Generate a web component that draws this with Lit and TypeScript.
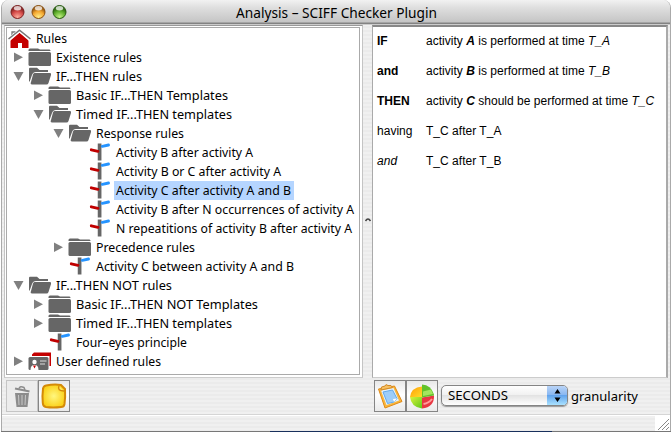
import { LitElement, html, css, svg } from "lit";
import { customElement } from "lit/decorators.js";
import { classMap } from "lit/directives/class-map.js";

type Row = { level: number; icon: string; text: string; width: number; arrow?: "open" | "closed"; selected?: boolean };

const ROWS: Row[] = [
  { level: 0, icon: "home", text: "Rules", width: 31 },
  { level: 1, icon: "closed", text: "Existence rules", width: 86, arrow: "closed" },
  { level: 1, icon: "open", text: "IF...THEN rules", width: 86, arrow: "open" },
  { level: 2, icon: "closed", text: "Basic IF...THEN Templates", width: 152, arrow: "closed" },
  { level: 2, icon: "open", text: "Timed IF...THEN templates", width: 156, arrow: "open" },
  { level: 3, icon: "open", text: "Response rules", width: 88, arrow: "open" },
  { level: 4, icon: "sign", text: "Activity B after activity A", width: 137 },
  { level: 4, icon: "sign", text: "Activity B or C after activity A", width: 165 },
  { level: 4, icon: "sign", text: "Activity C after activity A and B", width: 175, selected: true },
  { level: 4, icon: "sign", text: "Activity B after N occurrences of activity A", width: 238 },
  { level: 4, icon: "sign", text: "N repeatitions of activity B after activity A", width: 236 },
  { level: 3, icon: "closed", text: "Precedence rules", width: 99, arrow: "closed" },
  { level: 3, icon: "sign", text: "Activity C between activity A and B", width: 198 },
  { level: 1, icon: "open", text: "IF...THEN NOT rules", width: 116, arrow: "open" },
  { level: 2, icon: "closed", text: "Basic IF...THEN NOT Templates", width: 182, arrow: "closed" },
  { level: 2, icon: "closed", text: "Timed IF...THEN templates", width: 156, arrow: "closed" },
  { level: 2, icon: "sign", text: "Four–eyes principle", width: 111 },
  { level: 1, icon: "user", text: "User defined rules", width: 105, arrow: "closed" },
];

const ICONS: Record<string, unknown> = {
  home: svg`<path d="M4 9V3h3v3" fill="none" stroke="#777" stroke-width="1.3"/><path d="M2.500 10.500L11.500 3.500L20.500 10.500V19H14V14h-4v5H2.500Z" fill="#c40000"/><path d="M.5 11L11.500 1.500L22.500 11" fill="none" stroke="#fff" stroke-width="3.500"/><path d="M.5 10L11.500 1.200L22.500 10" fill="none" stroke="#777" stroke-width="1.600"/>`,
  closed: svg`<path d="M.5 3V2Q.5.500 2 .5H10L12 1.500H21.500Q22.500 1.500 22.500 3Z" fill="#666"/><path d="M2 4H21.500Q23 4 23 5.500V16.500Q23 18 21.500 18H2Q.5 18 .5 16.500V5.500Q.5 4 2 4Z" fill="#666"/>`,
  open: svg`<path d="M1 14V2Q1 .7 2 .7H9L11.500 3H20V5H8Q5 5 4 8L1.500 15Z" fill="#666"/><path d="M6.500 6H22Q23.500 6 23 8L20.500 16Q20 17.500 18.500 17.500H4Q2 17.500 3 15L5 7.500Q5.400 6 6.500 6Z" fill="#666"/>`,
  sign: svg`<path d="M11.600 .5V17.500" stroke="#666" stroke-width="3.700"/><path d="M3.300 6.800L10 8.300" stroke="#c00000" stroke-width="2.900" stroke-linecap="round"/><path d="M14.300 3.400L20.500 2" stroke="#2694ff" stroke-width="2.900" stroke-linecap="round"/>`,
  user: svg`<path d="M4 4V2.500L6 .5H23V14H21.500V4Z" fill="#c40000"/><rect x=".5" y="5" width="20" height="13" rx="1.500" fill="#666"/><circle cx="6.500" cy="10" r="2.200" fill="#fff"/><path d="M2.500 18Q2.500 13 6.500 13T10.500 18Z" fill="#fff"/><path d="M5 13.500h3L6.500 16.500Z" fill="#c40000"/><path d="M12 9h6.500M12 12h5" stroke="#ddd" stroke-width="1.200"/>`,
};

@customElement("app-root")
export class AppRoot extends LitElement {
  static styles = css`
    :host { display: block; width: 672px; height: 433px; overflow: hidden; background: #fff; font: 12.5px "Noto Sans", sans-serif; color: #000; }
    * { box-sizing: border-box; }
    svg { display: block; flex: none; overflow: visible; }
    .window { height: 431px; width: 670px; margin-left: 1px; border: solid #aaa; border-width: 0 1px 0 1px; border-radius: 8px 8px 0 0; display: flex; flex-direction: column; background: repeating-linear-gradient(#f0f0f0 0 2px, #ebebeb 2px 4px); overflow: hidden; }
    .title { height: 25px; flex: none; background: linear-gradient(#f2f2f2, #dedede 8px, #c5c5c5 22px, #858585 23px, #808080 24px, #ccc 24px); display: flex; padding: 5px 0 0 8px; gap: 6px; }
    .title-label { margin-left: 163px; margin-top: -1px; }
    .body { height: 391px; flex: none; display: flex; padding-left: 2px; padding-right: 2px; border-bottom: 1px solid #fff; box-shadow: 0 -1px #d5d5d5 inset; }
    .left { width: 359px; display: flex; flex-direction: column; }
    .pane { height: 353px; flex: none; border: 1px solid #c4c4c4; border-top-color: #999; border-bottom-color: #ccc; background: #fff; padding: 1px 2px 2px 1px; }
    .tree { height: 348px; border: 1px solid #aaa; background: #fff; padding-top: 1px; }
    .row { height: 19px; display: flex; align-items: center; }
    .spacer { flex: none; }
    .icon { width: 24px; height: 19px; margin-left: 1px; }
    .label { height: 19px; margin-left: 2px; padding: 0 2px; }
    .selected { background: #b5d5ff; padding-right: 3px; }
    .divider { width: 9px; display: flex; align-items: center; justify-content: center; }
    .right { flex: 1; display: flex; flex-direction: column; }
    .doc { height: 353px; background: #fff; border: solid #aaa; border-width: 2px 2px 1px 1px; border-top-color: #888; border-bottom-color: #ccc; flex: none; padding: 0 0 0 4px; font: 12px "Liberation Sans", sans-serif; letter-spacing: .02px; }
    .line { height: 30px; display: flex; align-items: center; position: relative; top: -1px; }
    .key { width: 49px; }
    .tools { display: flex; height: 32px; margin: 2px 0 0 2px; align-items: flex-start; }
    .button { width: 32px; height: 32px; border: 1px solid #858585; background: linear-gradient(#e8e8e8, #fff 45%, #eaeaea); display: flex; align-items: center; justify-content: center; }
    .disabled { border-color: #c5c5c5; background: #ececec; }
    .select { margin: 5px 0 0 3px; width: 127px; height: 21px; border: 1px solid #858585; border-radius: 5px; display: flex; overflow: hidden; background: linear-gradient(#fff, #f1f1f1 45%, #e3e3e3 50%, #fff); box-shadow: 0 1px 1px #999; }
    .value { width: 105px; padding-left: 6px; }
    .knob { flex: 1; display: flex; align-items: center; justify-content: center; background: linear-gradient(#b9d4f7, #8ab8f1 45%, #62a4ed 50%, #a9e2ff); }
    .gran { margin: 7px 0 0 3px; }
    .status { flex: 1; display: flex; justify-content: flex-end; align-items: flex-end; }
    .grip { width: 15px; height: 15px; background: #fff; }
    .edge { height: 1px; margin-left: 1px; width: 670px; background: linear-gradient(90deg, #777 0 269px, #18305c 269px 551px, #777 551px); }
  `;

  label(text: string, width: number, size = 12.5) {
    return html`<svg width=${width} height="19"><text x="0" y="14" font-size=${size} textLength=${width} lengthAdjust="spacingAndGlyphs">${text}</text></svg>`;
  }

  light(a: string, b: string, c: string, id: string) {
    return html`<svg width="15" height="15"><defs><radialGradient id=${id} cx=".5" cy=".9" r=".75"><stop offset="0" stop-color=${a}/><stop offset=".6" stop-color=${b}/><stop offset="1" stop-color=${c}/></radialGradient></defs><circle cx="7.500" cy="7" r="6.500" fill="url(#${id})" stroke=${c} stroke-width="1"/><ellipse cx="7.500" cy="3.200" rx="3.600" ry="2.200" fill="#fff" opacity=".75"/></svg>`;
  }

  row(r: Row) {
    return html`<div class="row">
      <span class="spacer" style="width:${r.level ? r.level * 20 - 14 : 0}px"></span>
      ${r.level ? html`<svg width="14" height="19">${r.arrow === "closed" ? svg`<path d="M1 4.500V14L10 9.200Z" fill="#808080"/>` : r.arrow === "open" ? svg`<path d="M.5 5H10.500L5.500 14Z" fill="#808080"/>` : ""}</svg>` : ""}
      <svg class="icon">${ICONS[r.icon]}</svg>
      <span class=${classMap({ label: true, selected: !!r.selected })}>${this.label(r.text, r.width)}</span>
    </div>`;
  }

  render() {
    return html`<div class="window">
      <div class="title">
        ${this.light("#ffb0a0", "#d44a48", "#7c2020", "red")}${this.light("#fff08a", "#f4a62e", "#8a5010", "amber")}${this.light("#c8f58a", "#5fae2c", "#285c10", "green")}
        <span class="title-label">${this.label("Analysis – SCIFF Checker Plugin", 201, 14)}</span>
      </div>
      <div class="body">
        <div class="left">
          <div class="pane"><div class="tree">${ROWS.map((r) => this.row(r))}</div></div>
          <div class="tools">
            <div class="button disabled"><svg width="20" height="24"><path d="M3 9H17L15.500 23H4.500Z" fill="#8c8c8c"/><path d="M6.500 11l.5 10M10 11v10M13.500 11L13 21" stroke="#c8c8c8"/><path d="M3 4.500L17.500 7.500" stroke="#8c8c8c" stroke-width="2"/><path d="M7 4.500Q8 1.500 12 3.500L13 6" fill="none" stroke="#8c8c8c" stroke-width="1.500"/></svg></div>
            <div class="button"><svg width="26" height="26"><defs><radialGradient id="note"><stop stop-color="#fff780"/><stop offset="1" stop-color="#fbd21c"/></radialGradient></defs><path d="M5 2.500Q13 1 20 2L24 6Q24.500 14 23.500 21Q23 24 20 24Q12 25 5 24Q2 23.500 1.800 20Q1 13 2 6Q2.300 3 5 2.500Z" fill="url(#note)" stroke="#d48a08" stroke-width="2"/><path d="M18 3Q16 8 23 8" fill="#ffe868" stroke="#d48a08" stroke-width="1.500"/></svg></div>
          </div>
        </div>
        <div class="divider"><svg width="6" height="4"><path d="M.5 3Q3-.8 5.500 3" fill="none" stroke="#444" stroke-width="1.500"/></svg></div>
        <div class="right">
          <div class="doc">
            <div class="line"><b class="key">IF</b><span>activity <b><i>A</i></b> is performed at time <i>T_A</i></span></div>
            <div class="line"><b class="key">and</b><span>activity <b><i>B</i></b> is performed at time <i>T_B</i></span></div>
            <div class="line"><b class="key">THEN</b><span>activity <b><i>C</i></b> should be performed at time <i>T_C</i></span></div>
            <div class="line"><span class="key">having</span><span>T_C after T_A</span></div>
            <div class="line"><i class="key">and</i><span>T_C after T_B</span></div>
          </div>
          <div class="tools">
            <div class="button"><svg width="28" height="28"><path d="M2.500 7L18.500 4L26 19.500L9 26Z" fill="#f9b63c" stroke="#e08a17"/><path d="M5 8.500L17.500 6L23 18.500L10.500 23Z" fill="#e4f2ff"/><path d="M7 10L16.500 8L21 16.500L18 20L11.500 21.500Z" fill="#9dcdf8" stroke="#64a9e8"/><path d="M21 16.500L17 17L18 20Z" fill="#fff"/><path d="M5 8L5.500 5L9 4Q9.500 1.500 12 3.500L15 3.500L16.500 5.500Z" fill="#f8c060" stroke="#d08a2a"/></svg></div>
            <div class="button"><svg width="28" height="28"><defs><linearGradient id="gold" y2="1"><stop stop-color="#ff9c08"/><stop offset="1" stop-color="#ffdc28"/></linearGradient><linearGradient id="lime" y2="1"><stop stop-color="#d9f23a"/><stop offset="1" stop-color="#5fc81c"/></linearGradient></defs><path d="M14 15V4.500Q3 5.500 2 15Z" fill="url(#gold)"/><path d="M14 15H2Q3 25 14 26.500Z" fill="url(#lime)"/><path d="M14 15.500L26 13.500Q26.500 25 14 26.500Z" fill="#e83742"/><path d="M15.500 22Q21 21 24 17" fill="none" stroke="#ff9c9c" stroke-width="2"/><path d="M14 15.500V2.500Q23 3 26 12.500V13.500Z" fill="#62c22a"/><path d="M15 9.500L23 7.500L25 12L15 14Z" fill="#a3e65e"/></svg></div>
            <div class="select"><span class="value">${this.label("SECONDS", 60, 13)}</span><span class="knob"><svg width="7" height="13"><path d="M3.500 0L6.500 4.500H.5ZM3.500 13L6.500 8.500H.5Z"/></svg></span></div>
            <span class="gran">${this.label("granularity", 67, 13)}</span>
          </div>
        </div>
      </div>
      <div class="status"><svg class="grip" width="15" height="15"><path d="M3 14L14 3M7 14L14 7M11 14L14 11" stroke="#888" stroke-width="1"/></svg></div>
    </div><div class="edge"></div>`;
  }
}
